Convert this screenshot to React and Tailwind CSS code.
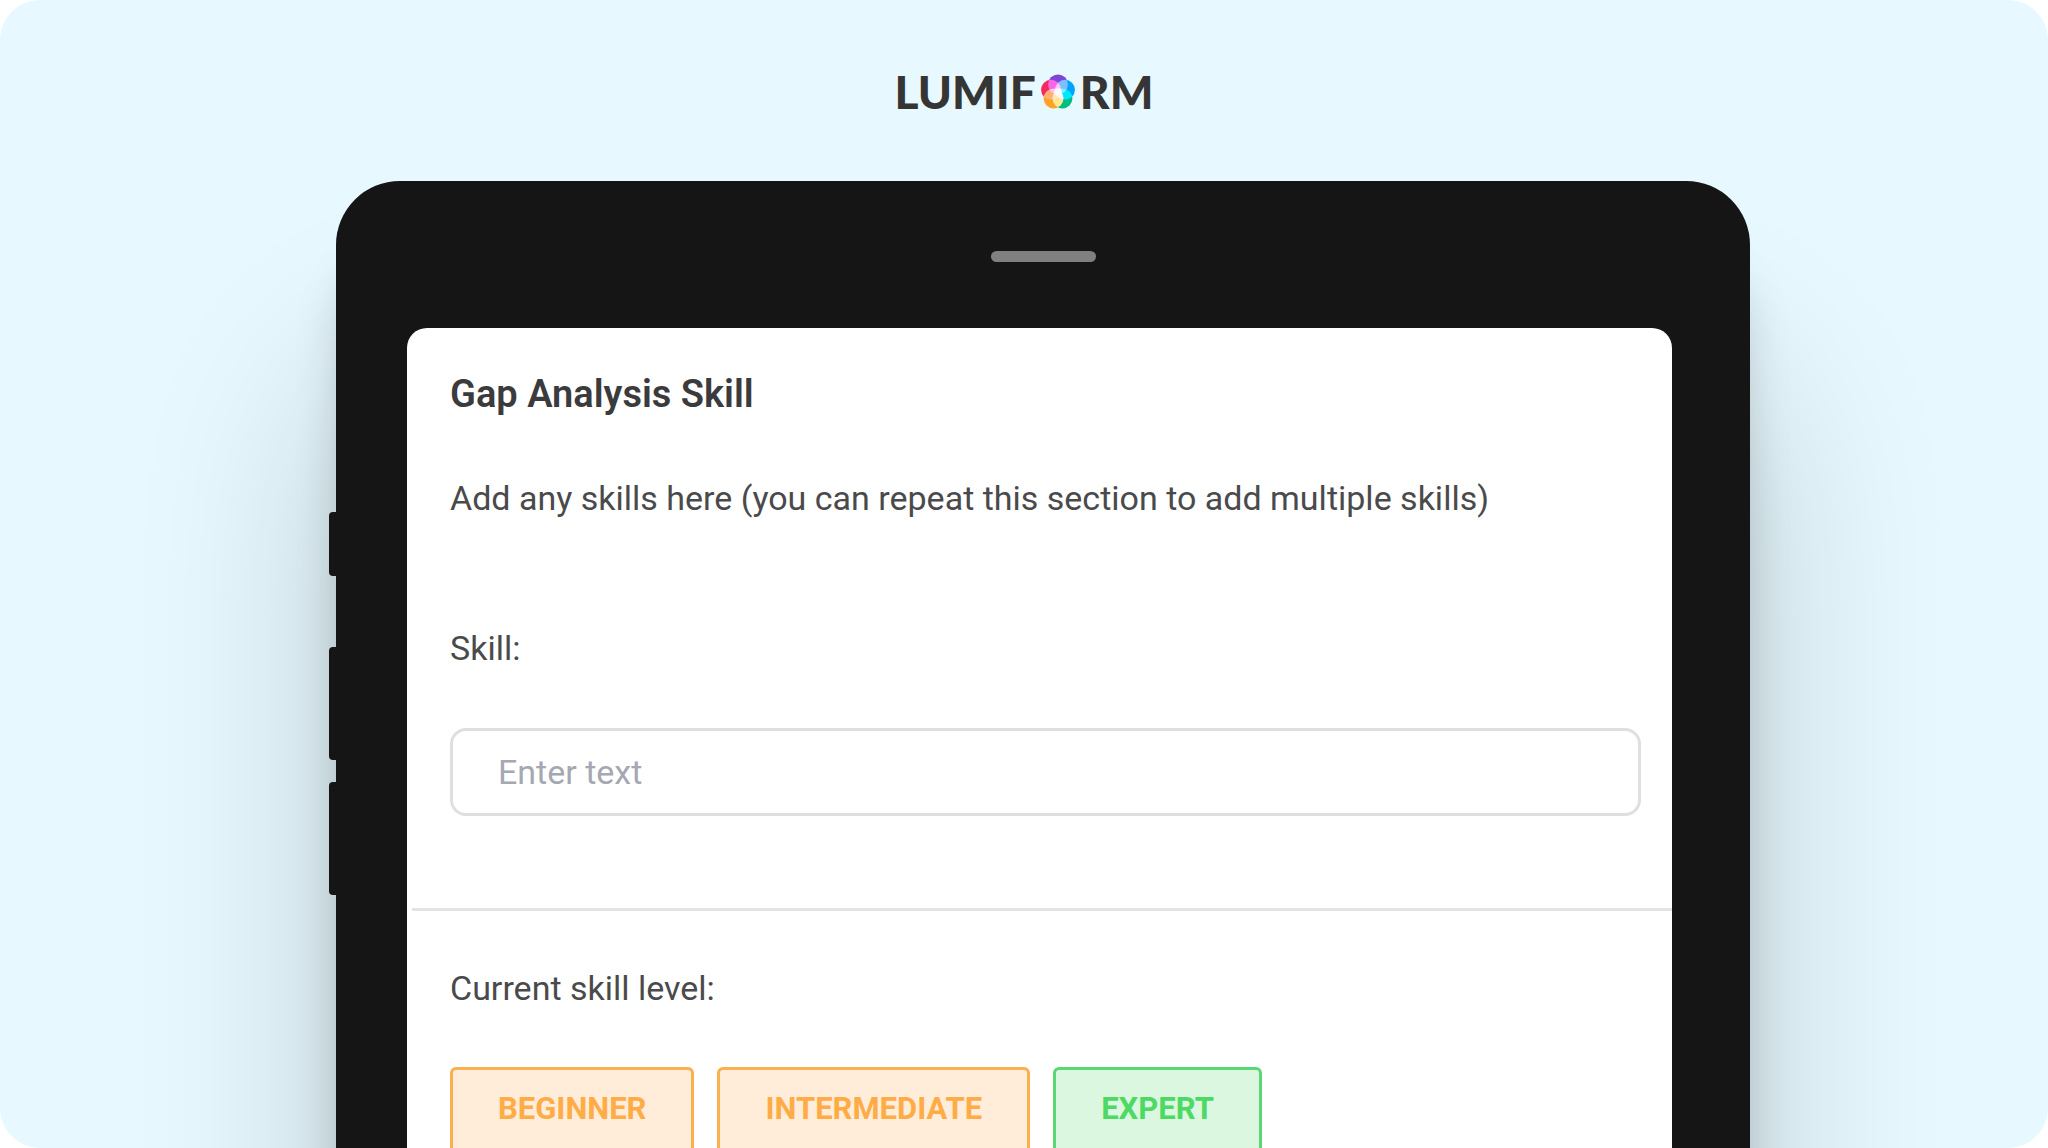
import React, { useState } from 'react';

const petals = [
    { cx: 18, cy: 10.8, fill: '#7f45d8' },
    { cx: 24.6, cy: 15.8, fill: '#00a4ff' },
    { cx: 22.2, cy: 24.2, fill: '#00bd80' },
    { cx: 13.8, cy: 24.2, fill: '#ffa226' },
    { cx: 11.4, cy: 15.8, fill: '#f52a5c' },
];

const levels = [
    { label: 'Beginner', style: 'border-[#fbb04f] bg-[#ffedda] text-[#ffac47]' },
    { label: 'Intermediate', style: 'border-[#fbb04f] bg-[#ffedda] text-[#ffac47]' },
    { label: 'Expert', style: 'border-[#5bd873] bg-[#dbf7df] text-[#4cd964]' },
];

const Logo = () => (
    <div className="flex items-center justify-center gap-1 font-['Lato',sans-serif] text-[46px] leading-[48px] font-black text-[#353535]">
        <span>LUMIF</span>
        <svg viewBox="1 1 34 34" className="isolate w-9 h-9" aria-hidden="true">
            {petals.map((p) => (
                <circle key={p.fill} cx={p.cx} cy={p.cy} r="9.4" fill={p.fill} className="mix-blend-screen" />
            ))}
            <circle cx="18" cy="18" r="4" fill="#fff" opacity="0.6" />
        </svg>
        <span>RM</span>
    </div>
);

const App = () => {
    const [skill, setSkill] = useState('');
    const [level, setLevel] = useState(null);

    return (
        <div className="h-screen bg-white font-['Roboto',sans-serif]">
            <div className="h-full flex flex-col rounded-[40px] bg-[#e7f9ff] overflow-hidden">
                <header className="pt-[68px] pb-[65px]">
                    <Logo />
                </header>

                {/* Tablet */}
                <main className="grow pl-[336px] pr-[298px]">
                    <div className="relative min-h-[1400px] rounded-[64px] bg-[#151515] shadow-[0_200px_200px_rgba(0,0,0,0.2),0_80px_50px_-10px_rgba(0,0,0,0.22)]">
                        {/* Side buttons */}
                        <div className="absolute -left-[7px] top-[331px] w-3 h-[64px] rounded-sm bg-[#151515]" />
                        <div className="absolute -left-[7px] top-[466px] w-3 h-[113px] rounded-sm bg-[#151515]" />
                        <div className="absolute -left-[7px] top-[601px] w-3 h-[113px] rounded-sm bg-[#151515]" />

                        <div className="flex justify-center pt-[70px] pb-[66px]">
                            <div className="w-[105px] h-[11px] rounded-full bg-[#808080]" />
                        </div>

                        {/* Screen */}
                        <div className="ml-[71px] mr-[78px] min-h-[1200px] rounded-t-[20px] bg-white text-[34px] leading-[40px] text-[#4a4a4c]">
                            <section className="pt-[44px] pl-[43px] pr-[31px] pb-[92px]">
                                <h1 className="text-[38px] leading-[44px] font-semibold text-[#3b3b3d]">Gap Analysis Skill</h1>
                                <p className="mt-[62px]">Add any skills here (you can repeat this section to add multiple skills)</p>
                                <label htmlFor="skill" className="block mt-[110px]">Skill:</label>
                                <input
                                    id="skill"
                                    type="text"
                                    value={skill}
                                    onChange={(e) => setSkill(e.target.value)}
                                    placeholder="Enter text"
                                    className="block mt-[60px] w-full h-[88px] px-[45px] rounded-2xl border-3 border-[#dfdfdf] placeholder:text-[#a5a8b2]"
                                />
                            </section>

                            <hr className="ml-[5px] border-t-3 border-[#e3e3e3]" />

                            <section className="pt-[57px] pl-[43px]">
                                <h2 id="level-label">Current skill level:</h2>
                                <div role="group" aria-labelledby="level-label" className="flex gap-[23px] mt-[59px]">
                                    {levels.map((l) => (
                                        <button
                                            key={l.label}
                                            type="button"
                                            aria-pressed={level === l.label}
                                            onClick={() => setLevel(l.label)}
                                            className={`px-[45px] pt-[19px] pb-[26px] border-3 rounded-md text-[31px] leading-[40px] font-bold uppercase ${l.style}`}
                                        >
                                            {l.label}
                                        </button>
                                    ))}
                                </div>
                            </section>
                        </div>
                    </div>
                </main>
            </div>
        </div>
    );
};

export default App;
